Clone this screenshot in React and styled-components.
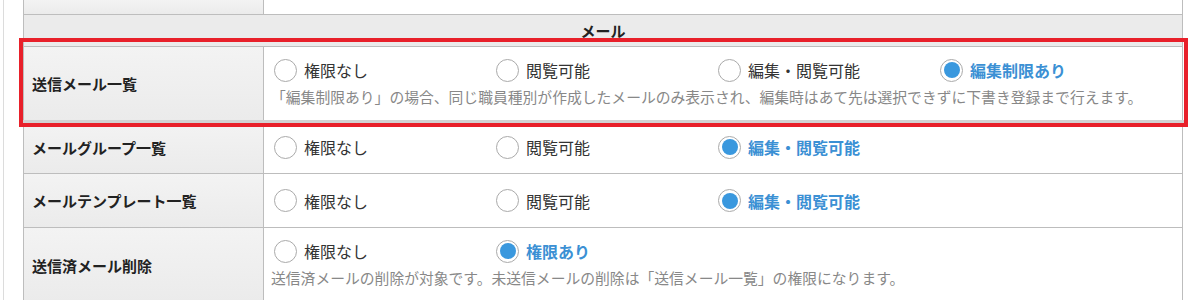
import React from 'react';
import styled, { createGlobalStyle } from 'styled-components';

const GlobalStyle = createGlobalStyle`
  body {
    margin: 0;
    background: #fff;
    font-family: "Noto Sans CJK JP", "Noto Sans", sans-serif;
    color: #333;
  }
`;

const Page = styled.div`
  margin-left: 3px;
  border-left: 1px solid #dcdcdc;
  padding-left: 19px;
  height: 300px;
  overflow: hidden;
`;

const Table = styled.div`
  width: 1160px;
  box-sizing: border-box;
  border-left: 1px solid #bdbdbd;
  border-right: 1px solid #bdbdbd;
`;

const Row = styled.div`
  position: relative;
  display: grid;
  grid-template-columns: 240px 1fr;
  height: ${({ $height }) => $height}px;
  border-bottom: 1px solid #bdbdbd;
`;

const SectionRow = styled.div`
  height: 31px;
  border-bottom: 1px solid #bdbdbd;
  background: #ebebeb;
  display: flex;
  align-items: center;
  justify-content: center;
  font-size: 15px;
  font-weight: bold;
  color: #222;
`;

const Label = styled.div`
  box-sizing: border-box;
  border-right: 1px solid #bdbdbd;
  background: linear-gradient(#f3f3f3, #ebebeb);
  display: flex;
  align-items: center;
  padding-left: 8px;
  font-size: 15px;
  font-weight: bold;
  color: #222;
`;

const Content = styled.div`
  display: flex;
  flex-direction: column;
  justify-content: ${({ $top }) => ($top ? 'flex-start' : 'center')};
  padding: ${({ $top }) => ($top ? '10px' : '0')} 10px 0;
`;

const Options = styled.div`
  display: flex;
  height: 26px;
  align-items: center;
`;

const Option = styled.label`
  width: 222px;
  display: inline-flex;
  align-items: center;
  gap: 7px;
  font-size: 16px;
  color: ${({ $checked }) => ($checked ? '#3b90d4' : '#333')};
  font-weight: ${({ $checked }) => ($checked ? 'bold' : 'normal')};
`;

const Circle = styled.span`
  box-sizing: border-box;
  width: 23px;
  height: 23px;
  border-radius: 50%;
  border: 1px solid #aaa;
  background: #fff;
  display: inline-flex;
  align-items: center;
  justify-content: center;
  flex-shrink: 0;

  &::after {
    content: '';
    width: 16px;
    height: 16px;
    border-radius: 50%;
    background: ${({ $checked }) => ($checked ? '#3a98de' : 'transparent')};
  }
`;

const Note = styled.p`
  margin: 2px 0 0 -3px;
  font-size: 14.8px;
  line-height: 24px;
  color: #888;
  white-space: nowrap;
`;

const Highlight = styled.div`
  position: absolute;
  top: -9px;
  bottom: -7px;
  left: -5px;
  right: -6px;
  border: 4px solid #e8202a;
  box-shadow: inset 0 -3px 0 #d2d2d2;
  pointer-events: none;
  z-index: 2;
`;

const Radio = ({ label, checked }) => (
  <Option $checked={checked}>
    <Circle $checked={checked} />
    <span>{label}</span>
  </Option>
);

const rows = [
  {
    label: '送信メール一覧',
    height: 73,
    options: ['権限なし', '閲覧可能', '編集・閲覧可能', '編集制限あり'],
    checked: 3,
    note: '「編集制限あり」の場合、同じ職員種別が作成したメールのみ表示され、編集時はあて先は選択できずに下書き登録まで行えます。',
    highlight: true,
  },
  {
    label: 'メールグループ一覧',
    height: 52,
    options: ['権限なし', '閲覧可能', '編集・閲覧可能'],
    checked: 2,
  },
  {
    label: 'メールテンプレート一覧',
    height: 53,
    options: ['権限なし', '閲覧可能', '編集・閲覧可能'],
    checked: 2,
  },
  {
    label: '送信済メール削除',
    height: 74,
    options: ['権限なし', '権限あり'],
    checked: 1,
    note: '送信済メールの削除が対象です。未送信メールの削除は「送信メール一覧」の権限になります。',
  },
];

export default function App() {
  return (
    <>
      <GlobalStyle />
      <Page>
        <Table>
          <Row $height={14}>
            <Label />
            <div />
          </Row>
          <SectionRow>メール</SectionRow>
          {rows.map(row => (
            <Row key={row.label} $height={row.height}>
              <Label>{row.label}</Label>
              <Content $top={!!row.note}>
                <Options>
                  {row.options.map((opt, i) => (
                    <Radio key={opt} label={opt} checked={i === row.checked} />
                  ))}
                </Options>
                {row.note && <Note>{row.note}</Note>}
              </Content>
              {row.highlight && <Highlight />}
            </Row>
          ))}
        </Table>
      </Page>
    </>
  );
}
